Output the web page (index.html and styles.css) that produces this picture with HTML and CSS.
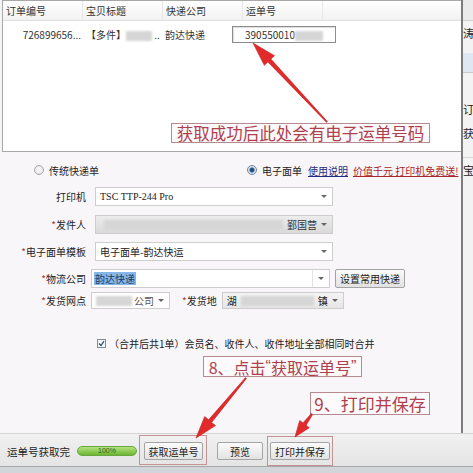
FILE: index.html
```html
<!DOCTYPE html>
<html lang="zh-CN">

<head>
  <meta charset="UTF-8">
  <meta name="viewport" content="width=device-width, initial-scale=1.0">
  <title>电子面单打印</title>
  <link rel="stylesheet" href="styles.css">
</head>

<body>
  <div class="screen">
    <div class="main">
      <div class="dialog">
        <!-- 订单列表 -->
        <div class="orders">
          <div class="orders-head">
            <div class="th">订单编号</div>
            <div class="th">宝贝标题</div>
            <div class="th">快递公司</div>
            <div class="th">运单号</div>
            <div class="th last"></div>
          </div>
          <div class="orders-row">
            <div class="td num">726899656...</div>
            <div class="td title">【多件】<span class="smudge w26"></span> ..</div>
            <div class="td express">韵达快递</div>
            <div class="td">
              <div class="waybill">390550010<span class="smudge w28"></span></div>
            </div>
          </div>
        </div>

        <!-- 打印设置 -->
        <div class="panel">
          <div class="mode-row">
            <div class="mode-left"><span class="radio"></span>传统快递单</div>
            <div class="mode-right">
              <span class="radio on"></span>电子面单
              <a class="link-help">使用说明</a>
              <a class="link-promo">价值千元 打印机免费送!</a>
            </div>
          </div>

          <div class="form-row r1">
            <span class="lbl">打印机</span>
            <div class="select wide mono">TSC TTP-244 Pro<span class="caret"></span></div>
          </div>
          <div class="form-row r2">
            <span class="lbl"><i class="req">*</i>发件人</span>
            <div class="select wide disabled"><span class="smudge grow"></span>鄞国营<span class="caret"></span></div>
          </div>
          <div class="form-row r3">
            <span class="lbl"><i class="req">*</i>电子面单模板</span>
            <div class="select wide">电子面单-韵达快运<span class="caret"></span></div>
          </div>
          <div class="form-row r4">
            <span class="lbl"><i class="req">*</i>物流公司</span>
            <div class="combo">
              <div class="combo-input"><span class="selected-text">韵达快递</span></div>
              <div class="combo-arrow"><span class="caret"></span></div>
            </div>
            <button class="btn btn-set">设置常用快递</button>
          </div>
          <div class="form-row r5">
            <span class="lbl"><i class="req">*</i>发货网点</span>
            <div class="select site"><span class="smudge w40"></span>公司<span class="caret"></span></div>
            <span class="lbl-inline"><i class="req">*</i>发货地</span>
            <div class="select place">湖<span class="smudge grow"></span>镇<span class="caret"></span></div>
          </div>

          <div class="check-row">
            <span class="checkbox">
              <svg width="7" height="7" viewBox="0 0 7 7"><path d="M1 3.5 L3 5.5 L6 1.2" fill="none" stroke="#2b4a6b" stroke-width="1.2"/></svg>
            </span>
            （合并后共1单）会员名、收件人、收件地址全部相同时合并
          </div>
        </div>
      </div>

      <!-- 后面窗口露出的一条 -->
      <div class="behind">
        <div class="bh-head"></div>
        <div class="bh-line">涛</div>
        <div class="bh-band"></div>
        <div class="bh-line tall">订</div>
        <div class="bh-line">获</div>
        <div class="bh-line ruled">宝</div>
      </div>
    </div>

    <div class="footer">
      <div class="status">运单号获取完</div>
      <div class="progress">100%</div>
      <button class="btn btn-get">获取运单号</button>
      <button class="btn btn-preview">预览</button>
      <button class="btn btn-print">打印并保存</button>
    </div>
    <div class="footer-bottom"></div>

    <!-- 标注 -->
    <div class="note note-top">获取成功后此处会有电子运单号码</div>
    <div class="note note-8">8、点击<span class="q">“</span>获取运单号<span class="q">”</span></div>
    <div class="note note-9">9、打印并保存</div>
    <div class="mark mark-get"></div>
    <div class="mark mark-print"></div>

    <svg class="arrows" width="473" height="473" viewBox="0 0 473 473">
      <polygon points="327.4,121.6 270.9,59.1 274.5,55.7 253,43 264.3,65.3 267.9,61.9 326.6,122.4" />
      <polygon points="246.5,378.4 211.6,422.4 215.5,425.6 196,438 204.7,416.6 208.6,419.8 245.5,377.6" />
      <polygon points="312.6,414.5 306.1,425.3 309.3,427.7 295,437 299.7,420.5 302.9,422.9 311.4,413.5" />
    </svg>
  </div>
</body>

</html>
```

FILE: styles.css
```css
* {
  box-sizing: border-box;
}

body {
  margin: 0;
  font-family: "Noto Sans CJK SC", "Noto Sans", sans-serif;
  font-size: 10px;
  color: #222;
}

.screen {
  position: relative;
  width: 473px;
  height: 473px;
  overflow: hidden;
  display: flex;
  flex-direction: column;
  background: #f5f3f5;
}

.main {
  display: flex;
  height: 433px;
}

.dialog {
  width: 463px;
  display: flex;
  flex-direction: column;
  border-right: 2px solid #7d7d7d;
}

/* 订单列表 */
.orders {
  height: 152px;
  margin-left: 2px;
  border: 1px solid #a8a8a8;
  border-right: none;
  background: #fff;
}

.orders-head,
.orders-row {
  display: grid;
  grid-template-columns: 80px 80px 80px 80px 1fr;
}

.orders-head {
  height: 20px;
  background: linear-gradient(#fff, #f2f2f2);
  border-bottom: 1px solid #e0e0e0;
}

.th {
  padding-left: 3px;
  line-height: 20px;
  color: #333;
  border-right: 1px solid #e8e8e8;
}

.th.last {
  border-right: none;
}

.orders-row {
  height: 22px;
  margin-top: 2px;
  align-items: center;
}

.td {
  white-space: nowrap;
  color: #333;
}

.td.num {
  text-align: right;
  padding-right: 2px;
}

.td.title {
  padding-left: 3px;
}

.td.express {
  padding-left: 2px;
}

.waybill {
  margin-left: -11px;
  width: 104px;
  height: 17px;
  padding-left: 12px;
  line-height: 15px;
  border: 1px solid #8c8c8c;
  background: #fff;
  box-shadow: inset 1px 1px 1px #ddd;
}

.smudge {
  display: inline-block;
  height: 10px;
  vertical-align: middle;
  background: #d6d6d6;
  filter: blur(1px);
}

.w26 {
  width: 26px;
}

.w28 {
  width: 28px;
}

.w40 {
  width: 44px;
  margin-right: 2px;
}

.smudge.grow {
  flex: 1;
  margin: 0 4px;
}

/* 打印设置 */
.panel {
  flex: 1;
  padding-top: 9px;
  background: #f9f6f9;
}

.mode-row {
  display: flex;
  align-items: center;
  height: 18px;
}

.mode-left {
  width: 247px;
  padding-left: 34px;
  display: flex;
  align-items: center;
  gap: 5px;
}

.mode-right {
  display: flex;
  align-items: center;
  gap: 5px;
  white-space: nowrap;
}

.radio {
  width: 10px;
  height: 10px;
  border-radius: 50%;
  border: 1px solid #a9a9a9;
  background: radial-gradient(#fdfdfd, #dcdcdc);
}

.radio.on {
  border-color: #6b87a8;
  background: radial-gradient(#1f3f66 0, #2f5b8c 2px, #cfd9e6 3px, #f4f6f9 5px);
}

.link-help {
  color: #1f2a80;
  text-decoration: underline;
  margin-left: 1px;
}

.link-promo {
  color: #a8262b;
  text-decoration: underline;
}

.form-row {
  display: flex;
  align-items: center;
  height: 19px;
}

.r1 {
  margin-top: 8px;
}

.r2 {
  margin-top: 9px;
}

.r3,
.r4 {
  margin-top: 8px;
}

.r5 {
  margin-top: 4px;
  height: 17px;
}

.lbl {
  width: 86px;
  text-align: right;
  white-space: nowrap;
}

.req {
  font-style: normal;
  color: #a33;
}

.select {
  height: 100%;
  display: flex;
  align-items: center;
  padding: 0 5px 0 4px;
  border: 1px solid #cdcdcd;
  background: #fff;
  white-space: nowrap;
}

.select.wide {
  margin-left: 9px;
  width: 238px;
}

.select.mono {
  font-family: "Liberation Serif", serif;
  font-size: 10px;
}

.select.disabled {
  background: linear-gradient(#ececec, #d9d9d9);
  color: #333;
}

.select.site {
  margin-left: 5px;
  width: 79px;
  color: #555;
}

.select.place {
  margin-left: 5px;
  width: 122px;
  background: linear-gradient(#f4f4f4, #e6e6e6);
}

.caret {
  margin-left: auto;
  width: 0;
  height: 0;
  border-left: 3px solid transparent;
  border-right: 3px solid transparent;
  border-top: 3px solid #666;
}

.select.disabled .caret,
.select.place .caret,
.select.site .caret {
  margin-left: 4px;
}

.combo {
  margin-left: 5px;
  width: 239px;
  height: 100%;
  display: flex;
  border: 1px solid #cdcdcd;
  background: #fff;
}

.combo-input {
  flex: 1;
  display: flex;
  align-items: center;
  padding-left: 2px;
}

.selected-text {
  background: #86b6e6;
  color: #1c3a66;
  padding: 0 1px;
  line-height: 13px;
}

.combo-arrow {
  width: 17px;
  display: flex;
  align-items: center;
  justify-content: center;
  border-left: 1px solid #e2e2e2;
}

.combo-arrow .caret {
  margin-left: 0;
}

.lbl-inline {
  margin-left: 12px;
  white-space: nowrap;
}

.btn {
  height: 18px;
  padding: 0;
  font-family: inherit;
  font-size: 10px;
  color: #222;
  border: 1px solid #a3a3a3;
  border-radius: 2px;
  background: linear-gradient(#fbfbfb, #e2e2e2);
}

.btn-set {
  margin-left: 5px;
  width: 70px;
  height: 19px;
}

.check-row {
  display: flex;
  align-items: center;
  gap: 3px;
  height: 12px;
  margin-top: 28px;
  padding-left: 97px;
  white-space: nowrap;
}

.checkbox {
  width: 9px;
  height: 9px;
  display: flex;
  align-items: center;
  justify-content: center;
  border: 1px solid #7d8c9c;
  background: #f6f6f6;
}

/* 后面窗口 */
.behind {
  flex: 1;
  overflow: hidden;
  background: #f3f3f3;
  font-size: 11px;
  white-space: nowrap;
}

.bh-head {
  height: 21px;
  background: #ebebeb;
  border-bottom: 1px solid #d2d2d2;
}

.bh-line {
  height: 24px;
  line-height: 24px;
}

.bh-line.tall {
  margin-top: 24px;
}

.bh-line.ruled {
  margin-top: 12px;
  border-top: 1px solid #d8d8d8;
}

.bh-band {
  height: 20px;
  margin-top: 8px;
  background: #dfe7f3;
  border-bottom: 1px solid #c9c9c9;
}

/* 底部状态栏 */
.footer {
  height: 33px;
  display: flex;
  align-items: center;
  padding: 2px 0 0 7px;
  background: linear-gradient(#f1f1f1, #e4e4e4);
  border-top: 1px solid #d4d4d4;
}

.status {
  width: 66px;
  white-space: nowrap;
  font-size: 10.5px;
}

.progress {
  margin-left: 4px;
  width: 60px;
  height: 10px;
  border-radius: 5px;
  border: 1px solid #69a63f;
  background: linear-gradient(#b5e27e, #6cb532);
  color: #2f5a14;
  font-family: "Liberation Sans", sans-serif;
  font-size: 7px;
  line-height: 8px;
  text-align: center;
}

.btn-get {
  margin-left: 7px;
  width: 59px;
}

.btn-preview {
  margin-left: 14px;
  width: 46px;
}

.btn-print {
  margin-left: 7px;
  width: 60px;
}

.footer-bottom {
  height: 7px;
  background: #d2d5d9;
  border-top: 1px solid #a6a6a6;
}

/* 标注 */
.note {
  position: absolute;
  display: flex;
  align-items: center;
  justify-content: center;
  white-space: nowrap;
  border: 1px solid #b68a8e;
  background: #fcfafa;
  color: #b0404e;
}

.note-top {
  left: 171px;
  top: 123px;
  width: 259px;
  height: 20px;
  font-size: 16.5px;
}

.note-8 {
  left: 203px;
  top: 356px;
  width: 159px;
  height: 21px;
  font-size: 16px;
}

.note-9 {
  left: 310px;
  top: 392px;
  width: 120px;
  height: 23px;
  font-size: 17px;
}

.q {
  font-family: "Liberation Sans", sans-serif;
}

.mark {
  position: absolute;
  border: 1px solid #c69394;
}

.mark-get {
  left: 139px;
  top: 435px;
  width: 68px;
  height: 30px;
}

.mark-print {
  left: 267px;
  top: 436px;
  width: 66px;
  height: 30px;
}

.arrows {
  position: absolute;
  left: 0;
  top: 0;
  pointer-events: none;
}

.arrows polygon {
  fill: #e12a2a;
  stroke: #c41d1d;
  stroke-width: 0.6;
}
```
